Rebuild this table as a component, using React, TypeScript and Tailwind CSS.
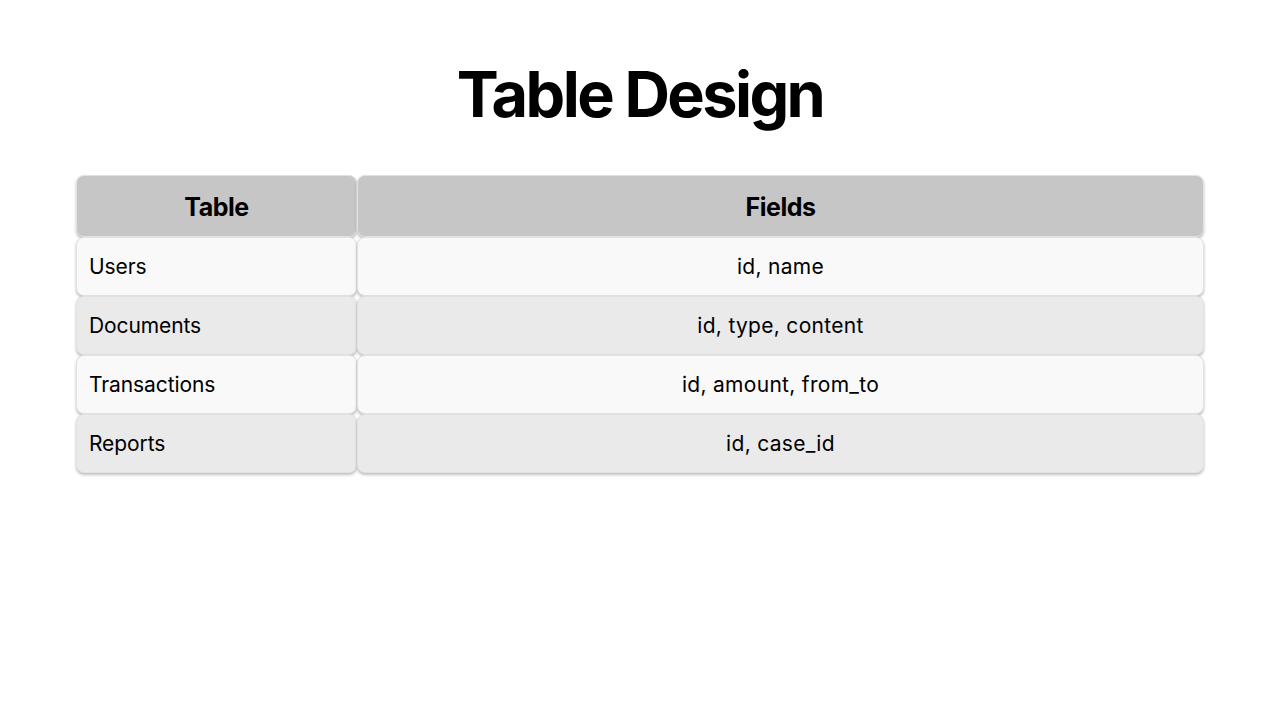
const rows = [
  { name: 'Users', fields: 'id, name' },
  { name: 'Documents', fields: 'id, type, content' },
  { name: 'Transactions', fields: 'id, amount, from_to' },
  { name: 'Reports', fields: 'id, case_id' },
];

const cell = 'rounded-[8px] border border-[#e2e2e2] shadow-[0_2px_3px_rgba(0,0,0,0.25)] flex items-center';

export default function App() {
  return (
    <div className="w-[1280px] h-[720px] bg-white flex flex-col items-center text-black" style={{ fontFamily: 'Inter, "Noto Sans", sans-serif' }}>
      <h1 className="mt-[56px] text-[63px] leading-[76px] font-bold tracking-[-2.6px]">Table Design</h1>
      <div className="mt-[43px] w-[1128px] grid grid-cols-[281px_1fr]">
        <div className={`${cell} h-[62px] pt-[4px] bg-[#c6c6c6] justify-center text-[25px] font-bold tracking-[-0.5px]`}>Table</div>
        <div className={`${cell} h-[62px] pt-[4px] bg-[#c6c6c6] justify-center text-[25px] font-bold tracking-[-0.5px]`}>Fields</div>
        {rows.map((r, i) => {
          const bg = i % 2 === 0 ? 'bg-[#f9f9f9]' : 'bg-[#eaeaea]';
          return (
            <div key={r.name} className="contents">
              <div className={`${cell} ${bg} h-[59px] pl-3 text-[21px] tracking-[-0.1px]`}>{r.name}</div>
              <div className={`${cell} ${bg} h-[59px] justify-center text-[21px] tracking-[0.3px]`}>{r.fields}</div>
            </div>
          );
        })}
      </div>
    </div>
  );
}
